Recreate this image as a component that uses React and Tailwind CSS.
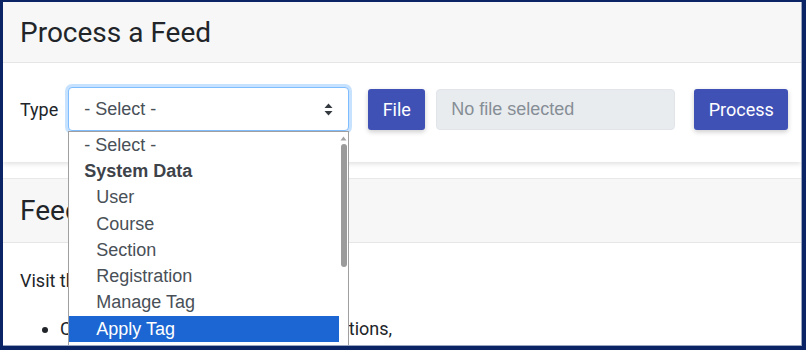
import React from "react";

const options = [
  { label: "- Select -", kind: "top" },
  { label: "System Data", kind: "group" },
  { label: "User", kind: "child" },
  { label: "Course", kind: "child" },
  { label: "Section", kind: "child" },
  { label: "Registration", kind: "child" },
  { label: "Manage Tag", kind: "child" },
  { label: "Apply Tag", kind: "child", selected: true },
  { label: "Remove Tag", kind: "child" },
  { label: "Enrollment", kind: "child" },
];

function SortArrows() {
  return (
    <svg width="9" height="13" viewBox="0 0 9 13" className="block">
      <path d="M4.5 0.5 L8.5 5 L0.5 5 Z" fill="#343a40" />
      <path d="M4.5 12.5 L8.5 8 L0.5 8 Z" fill="#343a40" />
    </svg>
  );
}

export default function App() {
  return (
    <div className="w-[806px] h-[350px] overflow-hidden bg-[#0b2465] pl-[3px] pt-[2px] pr-[4px] pb-[4px]">
      <div
        className="relative w-full h-full overflow-hidden bg-white border-r border-b border-[#9aa6bf]"
        style={{ fontFamily: "Roboto, 'Liberation Sans', sans-serif" }}
      >
        {/* Card 1 */}
        <div className="bg-white shadow-[0_2px_5px_rgba(0,0,0,0.12)]">
          <div className="h-[61px] bg-[#f7f7f7] border-b border-[#e6e6e6] flex items-center px-[17px]">
            <h4 className="text-[28px] leading-none text-[#212529] font-normal pt-[2px]">Process a Feed</h4>
          </div>
          <div className="pt-[24px] pb-[31px] pl-[17px] flex items-center">
            <span className="shrink-0 text-[18px] text-[#212529] mr-[10px]">Type</span>
            <div className="relative z-10 shrink-0">
              <div className="w-[281px] h-[44px] rounded-[4px] border border-[#80bdff] shadow-[0_0_0_3px_rgba(0,123,255,0.22)] bg-white flex items-center justify-between pl-[15px] pr-[15px]">
                <span
                  className="text-[18px] text-[#495057]"
                  style={{ fontFamily: "'Liberation Sans', Arial, sans-serif" }}
                >
                  - Select -
                </span>
                <SortArrows />
              </div>
              {/* open list */}
              <div
                className="absolute left-0 top-[44px] w-[281px] bg-white border border-[#a0a0a0] flex"
                style={{ fontFamily: "'Liberation Sans', Arial, sans-serif" }}
              >
                <div className="w-[270px]">
                  {options.map((o) => (
                    <div
                      key={o.label}
                      className={
                        "h-[26.3px] flex items-center text-[18px] " +
                        (o.kind === "child" ? "pl-[27px] " : "pl-[15px] ") +
                        (o.kind === "group" ? "font-bold text-[#3d4349] " : "") +
                        (o.selected ? "bg-[#1b66d2] text-white" : o.kind === "group" ? "" : "text-[#495057]")
                      }
                    >
                      {o.label}
                    </div>
                  ))}
                </div>
                <div className="w-[9px] flex flex-col items-center pt-[4px]">
                  <svg width="7" height="5" viewBox="0 0 7 5" className="block">
                    <path d="M3.5 0.5 L6.5 4.5 L0.5 4.5 Z" fill="#a3a3a3" />
                  </svg>
                  <div className="mt-[3px] w-[6px] h-[123px] rounded-[3px] bg-[#9b9b9b]" />
                </div>
              </div>
            </div>
            <button className="shrink-0 ml-[19px] w-[57px] h-[41px] rounded-[3px] bg-[#3f51b5] text-white text-[18px] shadow-[0_2px_5px_rgba(0,0,0,0.2)]">
              File
            </button>
            <div
              className="shrink-0 ml-[11px] w-[239px] h-[41px] rounded-[4px] bg-[#e9ecef] border border-[#e1e5ea] flex items-center pl-[14px] text-[18px] text-[#868e96]"
              style={{ fontFamily: "'Liberation Sans', Arial, sans-serif" }}
            >
              No file selected
            </div>
            <button className="shrink-0 ml-[19px] w-[94px] h-[41px] rounded-[3px] bg-[#3f51b5] text-white text-[18px] shadow-[0_2px_5px_rgba(0,0,0,0.2)]">
              Process
            </button>
          </div>
        </div>

        {/* Card 2 */}
        <div className="mt-[16px] bg-white border-t border-[#e8e8e8]">
          <div className="h-[64px] bg-[#f7f7f7] border-b border-[#e6e6e6] flex items-center px-[17px]">
            <h4 className="text-[28px] leading-none text-[#212529] font-normal">Feed Types</h4>
          </div>
          <div className="px-[17px] pt-[24px] text-[18px] text-[#212529] leading-[27px]">
            <p>Visit the links below:</p>
            <ul className="list-disc pl-[40px] mt-[21px]">
              <li>Create users, tags, sections, registrations,</li>
            </ul>
          </div>
        </div>
      </div>
    </div>
  );
}
